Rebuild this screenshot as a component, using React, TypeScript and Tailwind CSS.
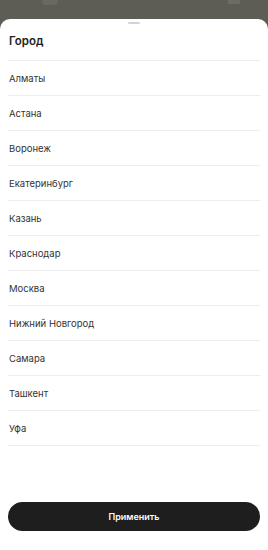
import React from "react";

const cities = [
  "Алматы",
  "Астана",
  "Воронеж",
  "Екатеринбург",
  "Казань",
  "Краснодар",
  "Москва",
  "Нижний Новгород",
  "Самара",
  "Ташкент",
  "Уфа",
];

export default function App() {
  return (
    <div
      className="w-[268px] h-[550px] bg-[#5d5c55] flex flex-col overflow-hidden"
      style={{ fontFamily: "Inter, 'Noto Sans', sans-serif" }}
    >
      <div className="h-[19px] shrink-0 relative">
        <div className="absolute left-[42px] top-0 w-[16px] h-[5px] rounded-b-sm bg-[#6a6961]" />
        <div className="absolute left-[228px] top-0 w-[12px] h-[4px] bg-[#6c6b64]" />
      </div>
      <div className="flex-1 bg-white rounded-t-[10px] flex flex-col px-2">
        <div className="flex justify-center pt-[3px]">
          <div className="w-[12px] h-[2px] rounded-full bg-[#d4d4d4]" />
        </div>
        <div className="h-[37px] flex items-center border-b border-[#ededed] px-[1px]">
          <span className="text-[11.5px] font-semibold text-[#222]">Город</span>
        </div>
        {cities.map((c) => (
          <div
            key={c}
            className="h-[35px] flex items-center border-b border-[#ededed] px-[1px] pt-[2px]"
          >
            <span className="text-[9.5px] text-[#333]">{c}</span>
          </div>
        ))}
        <div className="flex-1" />
        <div className="pb-[19px]">
          <button className="w-full h-[29px] rounded-full bg-[#1e1e1e] text-white text-[9px] font-semibold">
            Применить
          </button>
        </div>
      </div>
    </div>
  );
}
